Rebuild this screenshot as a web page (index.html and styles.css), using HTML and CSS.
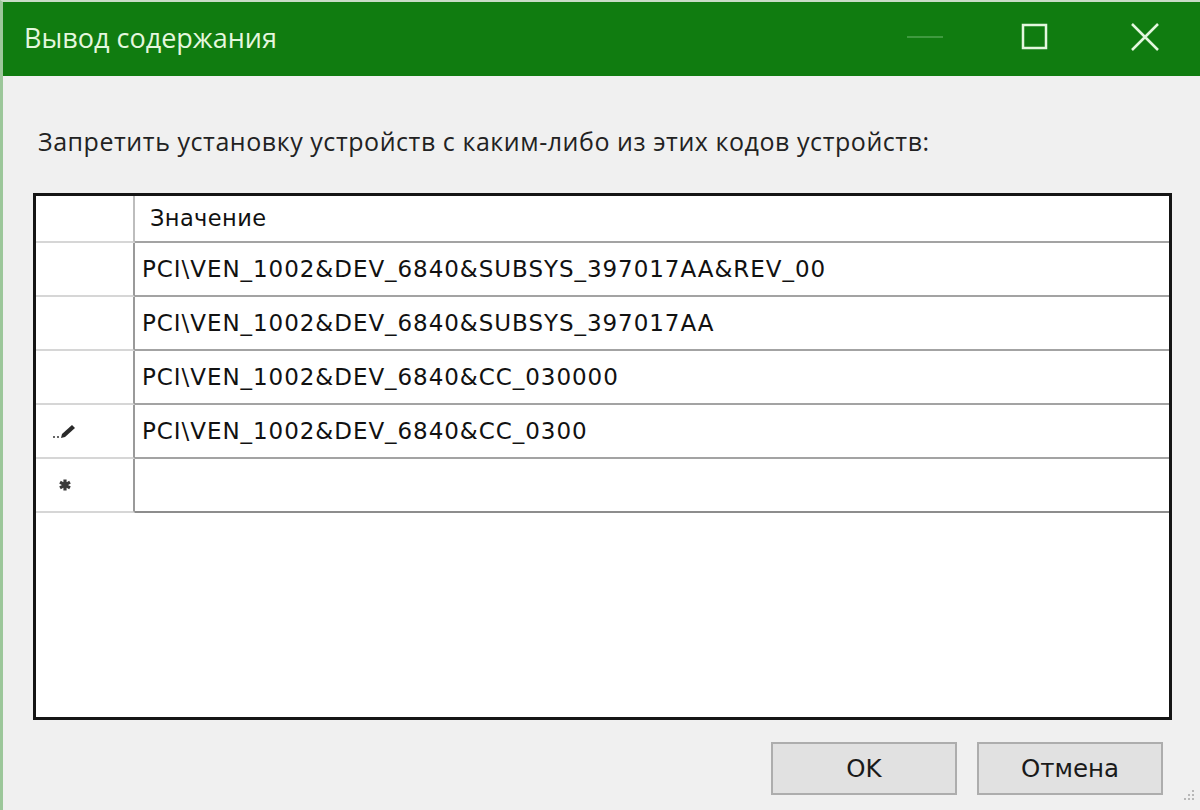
FILE: index.html
```html
<!DOCTYPE html>
<html lang="ru">
<head>
    <meta charset="UTF-8">
    <title>Вывод содержания</title>
    <link rel="stylesheet" href="styles.css">
</head>
<body>
    <div class="window">
        <div class="titlebar">
            <span class="title">Вывод содержания</span>
            <div class="controls">
                <span class="ctl">
                    <svg width="40" height="30" viewBox="0 0 40 30"><line x1="2" y1="15" x2="38" y2="15" stroke="#3f9a3f" stroke-width="2"/></svg>
                </span>
                <span class="ctl">
                    <svg width="30" height="30" viewBox="0 0 30 30"><rect x="3" y="3" width="23" height="23" fill="none" stroke="#e4f7de" stroke-width="2.5"/></svg>
                </span>
                <span class="ctl">
                    <svg width="30" height="30" viewBox="0 0 30 30"><path d="M2 2 L28 28 M28 2 L2 28" stroke="#e4f7de" stroke-width="2.5"/></svg>
                </span>
            </div>
        </div>

        <div class="content">
            <p class="prompt">Запретить установку устройств с каким-либо из этих кодов устройств:</p>

            <div class="grid">
                <div class="row head">
                    <div class="rowhead"></div>
                    <div class="cell">Значение</div>
                </div>
                <div class="row">
                    <div class="rowhead"></div>
                    <div class="cell">PCI\VEN_1002&amp;DEV_6840&amp;SUBSYS_397017AA&amp;REV_00</div>
                </div>
                <div class="row">
                    <div class="rowhead"></div>
                    <div class="cell">PCI\VEN_1002&amp;DEV_6840&amp;SUBSYS_397017AA</div>
                </div>
                <div class="row">
                    <div class="rowhead"></div>
                    <div class="cell">PCI\VEN_1002&amp;DEV_6840&amp;CC_030000</div>
                </div>
                <div class="row">
                    <div class="rowhead">
                        <svg width="28" height="20" viewBox="0 0 28 20">
                            <rect x="1" y="15" width="2" height="2" fill="#666"/>
                            <rect x="5" y="15" width="2" height="2" fill="#666"/>
                            <path d="M9 17 L10 13 L20 4 L23 7 L13 16 Z" fill="#2a2a2a"/>
                        </svg>
                    </div>
                    <div class="cell">PCI\VEN_1002&amp;DEV_6840&amp;CC_0300</div>
                </div>
                <div class="row newrow">
                    <div class="rowhead star">
                        <svg width="14" height="14" viewBox="0 0 14 14">
                            <path d="M7 1.5 L7 12.5 M2 4.2 L12 9.8 M12 4.2 L2 9.8" stroke="#3a3a3a" stroke-width="3.2"/>
                        </svg>
                    </div>
                    <div class="cell"></div>
                </div>
            </div>

            <div class="buttons">
                <button class="btn">OK</button>
                <button class="btn">Отмена</button>
            </div>
            <div class="grip">
                <svg width="16" height="16" viewBox="0 0 16 16">
                    <rect x="12" y="4" width="2" height="2" fill="#b8b8b8"/>
                    <rect x="8" y="8" width="2" height="2" fill="#b8b8b8"/>
                    <rect x="12" y="8" width="2" height="2" fill="#b8b8b8"/>
                    <rect x="4" y="12" width="2" height="2" fill="#b8b8b8"/>
                    <rect x="8" y="12" width="2" height="2" fill="#b8b8b8"/>
                    <rect x="12" y="12" width="2" height="2" fill="#b8b8b8"/>
                </svg>
            </div>
        </div>
    </div>
</body>
</html>
```

FILE: styles.css
```css
body {
    margin: 0;
    padding: 0;
    background-color: #f0f0f0;
    font-family: "DejaVu Sans", Verdana, sans-serif;
    color: #1a1a1a;
}
.window {
    width: 1200px;
    height: 810px;
    border-top: 2px solid #c9dcc6;
    border-left: 3px solid #9cc79a;
    box-sizing: border-box;
    overflow: hidden;
}
.titlebar {
    height: 74px;
    background-color: #107c10;
    display: flex;
    align-items: center;
    justify-content: space-between;
}
.title {
    font-family: "Open Sans", "Noto Sans", sans-serif;
    font-size: 27px;
    color: #e4f7de;
    padding-left: 21px;
    padding-bottom: 4px;
}
.controls {
    display: flex;
    align-items: center;
    padding-bottom: 4px;
}
.ctl {
    width: 110px;
    display: flex;
    justify-content: center;
}
.content {
    position: relative;
    height: 734px;
    padding-left: 30px;
}
.prompt {
    margin: 0;
    padding-top: 48px;
    padding-left: 5px;
    font-family: "Open Sans", "Noto Sans", sans-serif;
    font-size: 25px;
    letter-spacing: 0.55px;
    height: 69px;
    color: #222;
}
.grid {
    width: 1139px;
    height: 527px;
    border: 3px solid #151515;
    box-sizing: border-box;
    background-color: #fff;
}
.row {
    display: flex;
    height: 54px;
}
.row.head {
    height: 47px;
}
.rowhead {
    width: 99px;
    border-bottom: 2px solid #d6d6d6;
    border-right: 2px solid #9a9a9a;
    display: flex;
    align-items: center;
    padding-left: 16px;
    box-sizing: border-box;
}
.rowhead.star {
    padding-left: 22px;
}
.head .rowhead {
    border-right-color: #bdbdbd;
}
.cell {
    flex: 1;
    border-bottom: 2px solid #a3a3a3;
    font-size: 23px;
    letter-spacing: 0.95px;
    line-height: 52px;
    padding-left: 7px;
    color: #111;
}
.head .cell {
    font-size: 22.5px;
    letter-spacing: 0.4px;
    line-height: 45px;
    padding-left: 15px;
}
.newrow .cell {
    border-bottom-color: #8d8d8d;
}
.buttons {
    display: flex;
    justify-content: flex-end;
    gap: 20px;
    padding-top: 22px;
    padding-right: 37px;
}
.btn {
    width: 186px;
    height: 53px;
    background-color: #e1e1e1;
    border: 2px solid #adadad;
    font-family: "DejaVu Sans", Verdana, sans-serif;
    font-size: 24.5px;
    color: #1a1a1a;
    padding: 0;
}
.grip {
    position: absolute;
    right: 4px;
    bottom: 4px;
}
```
